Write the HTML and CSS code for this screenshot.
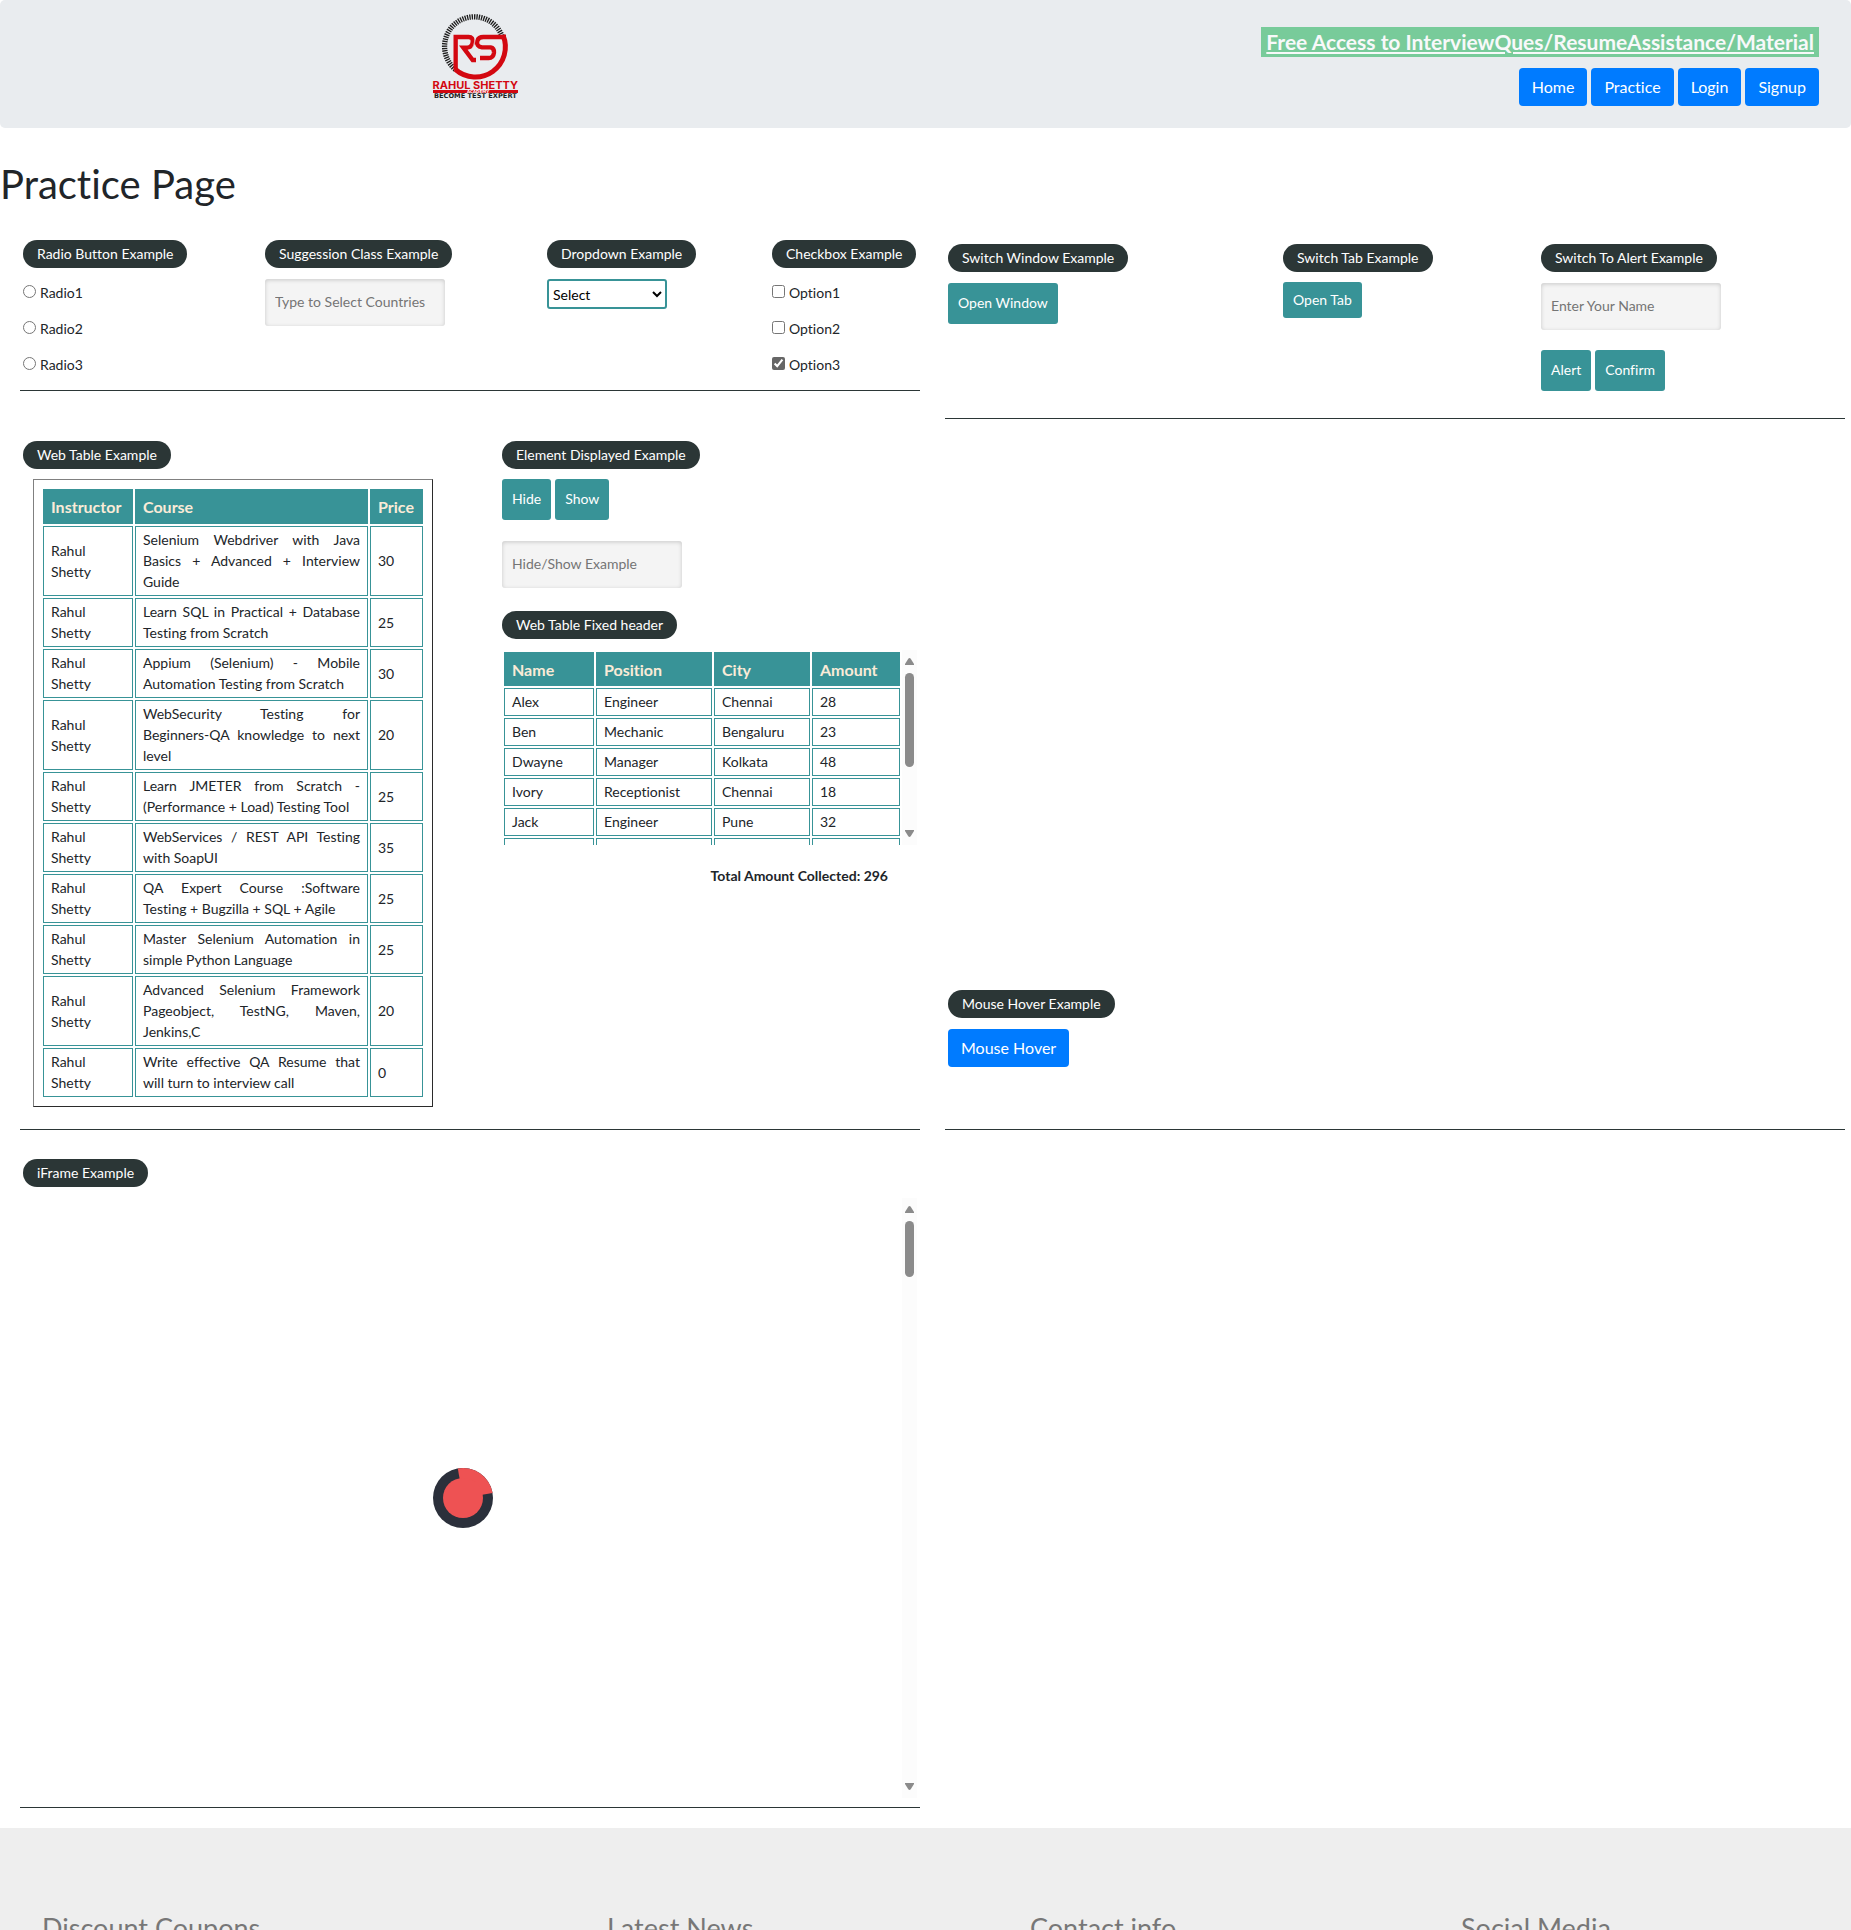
FILE: index.html
```html
<!DOCTYPE html>
<html lang="en">
<head>
<meta charset="utf-8">
<meta name="viewport" content="width=device-width, initial-scale=1">
<title>Practice Page</title>
<link rel="stylesheet" href="styles.css">
</head>
<body>
<header class="header">
  <div class="brand">
    <svg class="logo" viewBox="99 42 255 255" role="img" aria-label="Rahul Shetty Academy">
      <path d="M166 208A89 89 0 1 1 306 108" fill="none" stroke="#1d1d1d" stroke-width="16" stroke-dasharray="4 3"/>
      <g fill="none" stroke="#d30811">
        <path stroke-width="13" d="M167 211V111H206Q220 111 218 127Q216 142 202 143H190L218 180H228"/>
        <path stroke-width="13" d="M318 111H250Q236 111 232 122Q228 139 246 142H272Q283 144 282 158Q280 174 266 174H240"/>
        <path stroke-width="15" d="M309 106A90 90 0 0 1 166 208"/>
        <path stroke="#e9ecef" stroke-width="2" d="M226 112Q222 142 212 152"/>
      </g>
      <text class="logo-name" x="226" y="266">RAHUL SHETTY</text>
      <path d="M99 270H354V279H99Z" fill="#d30811"/>
      <text class="logo-sub" x="234" y="279">ACADEMY</text>
      <text class="logo-tag" x="226" y="295">BECOME TEST EXPERT</text>
    </svg>
  </div>
  <div class="header-links">
    <a class="promo" href="#">Free Access to InterviewQues/ResumeAssistance/Material</a>
    <nav class="nav">
      <button class="btn-primary">Home</button>
      <button class="btn-primary">Practice</button>
      <button class="btn-primary">Login</button>
      <button class="btn-primary">Signup</button>
    </nav>
  </div>
</header>

<h1 class="title">Practice Page</h1>

<main class="main">
  <section class="panel inputs">
    <div class="example" role="radiogroup" aria-labelledby="radio-title">
      <h2 class="pill" id="radio-title">Radio Button Example</h2>
      <div class="choices">
        <label class="choice"><input type="radio" name="radio">Radio1</label>
        <label class="choice"><input type="radio" name="radio">Radio2</label>
        <label class="choice"><input type="radio" name="radio">Radio3</label>
      </div>
    </div>
    <div class="example">
      <h2 class="pill">Suggession Class Example</h2>
      <input class="text-input" type="text" placeholder="Type to Select Countries" aria-label="Country">
    </div>
    <div class="example">
      <h2 class="pill">Dropdown Example</h2>
      <select class="select" aria-label="Dropdown"><option>Select</option></select>
    </div>
    <div class="example">
      <h2 class="pill">Checkbox Example</h2>
      <div class="choices">
        <label class="choice"><input type="checkbox">Option1</label>
        <label class="choice"><input type="checkbox">Option2</label>
        <label class="choice"><input type="checkbox" checked>Option3</label>
      </div>
    </div>
  </section>

  <section class="panel switches">
    <div class="example">
      <h2 class="pill">Switch Window Example</h2>
      <button class="btn">Open Window</button>
    </div>
    <div class="example example-tight">
      <h2 class="pill">Switch Tab Example</h2>
      <a class="btn btn-link" href="#">Open Tab</a>
    </div>
    <div class="example">
      <h2 class="pill">Switch To Alert Example</h2>
      <input class="text-input" type="text" placeholder="Enter Your Name" aria-label="Name">
      <div class="btn-row alert-row">
        <button class="btn">Alert</button>
        <button class="btn">Confirm</button>
      </div>
    </div>
  </section>

  <section class="panel tables">
    <div class="example example-tight">
      <h2 class="pill">Web Table Example</h2>
      <table class="table courses">
        <colgroup><col class="c-instructor"><col><col class="c-price"></colgroup>
        <thead><tr><th>Instructor</th><th>Course</th><th>Price</th></tr></thead>
        <tbody>
          <tr><td>Rahul Shetty</td><td>Selenium Webdriver with Java Basics + Advanced + Interview Guide</td><td>30</td></tr>
          <tr><td>Rahul Shetty</td><td>Learn SQL in Practical + Database Testing from Scratch</td><td>25</td></tr>
          <tr><td>Rahul Shetty</td><td>Appium (Selenium) - Mobile Automation Testing from Scratch</td><td>30</td></tr>
          <tr><td>Rahul Shetty</td><td>WebSecurity Testing for <span class="nowrap">Beginners-QA</span> knowledge to next level</td><td>20</td></tr>
          <tr><td>Rahul Shetty</td><td>Learn JMETER from Scratch - (Performance + Load) Testing Tool</td><td>25</td></tr>
          <tr><td>Rahul Shetty</td><td>WebServices / REST API Testing with SoapUI</td><td>35</td></tr>
          <tr><td>Rahul Shetty</td><td>QA Expert Course :Software Testing + Bugzilla + SQL + Agile</td><td>25</td></tr>
          <tr><td>Rahul Shetty</td><td>Master Selenium Automation in simple Python Language</td><td>25</td></tr>
          <tr><td>Rahul Shetty</td><td>Advanced Selenium Framework Pageobject, TestNG, Maven, Jenkins,C</td><td>20</td></tr>
          <tr><td>Rahul Shetty</td><td>Write effective QA Resume that will turn to interview call</td><td>0</td></tr>
        </tbody>
      </table>
    </div>
    <div class="side">
      <div class="example example-tight">
        <h2 class="pill">Element Displayed Example</h2>
        <div class="btn-row">
          <button class="btn">Hide</button>
          <button class="btn">Show</button>
        </div>
        <input class="text-input displayed" type="text" placeholder="Hide/Show Example" aria-label="Hide or show">
      </div>
      <div class="example">
        <h2 class="pill">Web Table Fixed header</h2>
        <div class="scroller people-scroller">
          <div class="scroller-view">
            <table class="table people">
              <colgroup><col class="c-name"><col class="c-position"><col class="c-city"><col></colgroup>
              <thead><tr><th>Name</th><th>Position</th><th>City</th><th>Amount</th></tr></thead>
              <tbody>
                <tr><td>Alex</td><td>Engineer</td><td>Chennai</td><td>28</td></tr>
                <tr><td>Ben</td><td>Mechanic</td><td>Bengaluru</td><td>23</td></tr>
                <tr><td>Dwayne</td><td>Manager</td><td>Kolkata</td><td>48</td></tr>
                <tr><td>Ivory</td><td>Receptionist</td><td>Chennai</td><td>18</td></tr>
                <tr><td>Jack</td><td>Engineer</td><td>Pune</td><td>32</td></tr>
                <tr><td></td><td></td><td></td><td></td></tr>
              </tbody>
            </table>
          </div>
          <div class="scrollbar" aria-hidden="true">
            <svg class="arrow" viewBox="0 0 9 7"><path d="M0 7V6L3.300 .8Q4.500 -.6 5.700 .8L9 6V7Z"/></svg>
            <div class="thumb thumb-people"></div>
            <svg class="arrow arrow-down" viewBox="0 0 9 7"><path d="M0 7V6L3.300 .8Q4.500 -.6 5.700 .8L9 6V7Z"/></svg>
          </div>
        </div>
        <p class="total">Total Amount Collected: 296</p>
      </div>
    </div>
  </section>

  <section class="panel hover">
    <div class="example">
      <h2 class="pill">Mouse Hover Example</h2>
      <button class="btn-primary">Mouse Hover</button>
    </div>
  </section>

  <section class="panel frame">
    <div class="example">
      <h2 class="pill">iFrame Example</h2>
      <div class="scroller frame-scroller">
        <div class="scroller-view loader-view">
          <svg class="loader" viewBox="0 0 60 60" role="img" aria-label="Loading">
            <circle cx="30" cy="30" r="30" fill="#2b303b"/>
            <path d="M30 30L24.800 .5A30 30 0 0 1 59.600 25Z" fill="#ee5253"/>
            <circle cx="30" cy="30" r="20" fill="#ee5253"/>
          </svg>
        </div>
        <div class="scrollbar" aria-hidden="true">
          <svg class="arrow" viewBox="0 0 9 7"><path d="M0 7V6L3.300 .8Q4.500 -.6 5.700 .8L9 6V7Z"/></svg>
          <div class="thumb thumb-frame"></div>
          <svg class="arrow arrow-down" viewBox="0 0 9 7"><path d="M0 7V6L3.300 .8Q4.500 -.6 5.700 .8L9 6V7Z"/></svg>
        </div>
      </div>
    </div>
  </section>
</main>

<footer class="footer">
  <h3>Discount Coupons</h3>
  <h3>Latest News</h3>
  <h3>Contact info</h3>
  <h3>Social Media</h3>
</footer>
</body>
</html>
```
FILE: styles.css
```css
* { box-sizing: border-box; }

body {
  display: flex;
  flex-direction: column;
  height: 100vh;
  margin: 0;
  overflow: hidden;
  background: #fff;
  color: #212529;
  font: 14px/21px Lato, "Trebuchet MS", sans-serif;
  font-variant-ligatures: none;
}

h1, h2, h3, p { margin: 0; font-weight: 400; }

button, input, select { font: inherit; }

/* Header */
.header {
  display: grid;
  grid-template-columns: 1fr 1fr;
  flex: none;
  background: #e9ecef;
  border-radius: 5px;
}
.brand { padding: 14px 0 0 26px; text-align: center; }
.logo { width: 85px; height: 85px; overflow: visible; }
.logo text { text-anchor: middle; font-weight: 700; }
.logo-name { fill: #d30811; font-family: Inter, sans-serif; font-size: 33px; }
.logo-sub { fill: #fff; font-family: "DejaVu Sans", sans-serif; font-size: 12px; }
.logo-tag { fill: #1d1d1d; font-family: "DejaVu Sans", sans-serif; font-size: 20px; }
.header-links {
  display: flex;
  flex-direction: column;
  align-items: flex-end;
  gap: 11px;
  padding: 27px 32px 22px 0;
}
.promo {
  padding: 0 5px;
  background: #78cb9a;
  color: #f8f9fa;
  font-size: 21px;
  font-weight: 700;
  line-height: 30px;
}
.nav { display: flex; gap: 4px; }

.btn-primary {
  height: 38px;
  padding: 0 13px 2px;
  border: 0;
  border-radius: 4px;
  background: #007bff;
  color: #fff;
  font-size: 16px;
}

.title { flex: none; padding-top: 32px; font-size: 40px; line-height: 48px; }

/* Example panels */
.main {
  display: grid;
  grid-template-columns: 1fr 1fr;
  column-gap: 25px;
  align-items: start;
  flex: none;
  padding: 32px 6px 20px 20px;
}
.panel { padding-left: 3px; border-bottom: 1px solid #2b3636; }
.inputs { display: grid; grid-template-columns: 242fr 282fr 225fr 148fr; padding-bottom: 15px; }
.switches { display: grid; grid-template-columns: 335fr 258fr 304fr; padding-top: 4px; padding-bottom: 27px; }
.tables { display: grid; grid-template-columns: 479fr 418fr; padding-top: 22px; padding-bottom: 22px; }
.hover { align-self: end; padding-bottom: 62px; }
.frame { padding-top: 29px; padding-bottom: 9px; }

.example { display: flex; flex-direction: column; align-items: flex-start; gap: 11px; }
.example-tight { gap: 10px; }
.side { display: flex; flex-direction: column; gap: 23px; }

.pill {
  padding: 0 14px;
  border-radius: 14px;
  background: #2b3636;
  color: #fff;
  font-size: 14px;
  line-height: 28px;
  white-space: nowrap;
}

.choices { display: flex; flex-direction: column; gap: 15px; padding-top: 3px; }
.choice { display: flex; align-items: flex-start; gap: 4px; }
.choice input { width: 13px; height: 13px; margin: 3px 0 0; accent-color: #666; }

.text-input {
  width: 180px;
  height: 47px;
  padding: 0 10px 2px;
  border: 0;
  border-radius: 3px;
  background: #f4f4f4;
  box-shadow: inset 0 1px 4px rgba(0, 0, 0, .18);
}
.text-input::placeholder { color: #757575; }
.displayed { margin-top: 11px; }

.select {
  width: 120px;
  height: 30px;
  border: 2px solid #389397;
  border-radius: 3px;
  background: #fff;
  color: #000;
}

.btn {
  padding: 9px 10px 11px;
  border: 0;
  border-radius: 3px;
  background: #389397;
  color: #fff;
}
.btn-link { padding: 7px 10px 8px; text-decoration: none; }
.btn-row { display: flex; gap: 4px; }
.alert-row { margin-top: 9px; }

/* Tables */
.table { table-layout: fixed; border-spacing: 2px; }
.table th {
  padding: 0 8px;
  background: #389397;
  color: #faebd7;
  font-size: 16px;
  text-align: left;
}
.table td { height: 28px; padding: 2px 7px 3px; border: 1px solid #389397; }
.courses {
  width: 400px;
  margin-left: 10px;
  padding: 7px;
  border: 1px solid;
  border-color: #808080 #2b2b2b #2b2b2b #808080;
  text-align: justify;
}
.courses th { height: 35px; }
.nowrap { white-space: nowrap; }
.c-instructor { width: 90px; }
.c-price { width: 53px; }
.people { width: 400px; }
.people th { height: 34px; }
.c-name { width: 90px; }
.c-position { width: 116px; }
.c-city { width: 96px; }
.total { align-self: flex-end; padding: 9px 32px 0 0; font-weight: 700; }

/* Scrolling areas */
.scroller { display: flex; width: calc(100% - 3px); }
.scroller-view { flex: 1; min-width: 0; overflow: hidden; }
.people-scroller { height: 195px; }
.frame-scroller { height: 600px; }
.loader-view { display: grid; place-items: center; }
.loader { width: 60px; height: 60px; }
.scrollbar {
  display: flex;
  flex-direction: column;
  align-items: center;
  width: 15px;
  padding: 8px 0;
  background: #fcfcfc;
}
.arrow { width: 9px; height: 7px; fill: #8b8b8b; }
.arrow-down { margin-top: auto; transform: rotate(180deg); }
.thumb { width: 9px; margin-top: 8px; border-radius: 5px; background: #8b8b8b; }
.thumb-people { height: 94px; }
.thumb-frame { height: 56px; }

/* Footer */
.footer {
  display: grid;
  grid-template-columns: 565fr 423fr 431fr 390fr;
  flex: 1;
  min-height: 0;
  padding: 84px 0 0 42px;
  overflow: hidden;
  background: #eee;
  color: #777;
}
.footer h3 { font-size: 27px; line-height: 32px; }
```
